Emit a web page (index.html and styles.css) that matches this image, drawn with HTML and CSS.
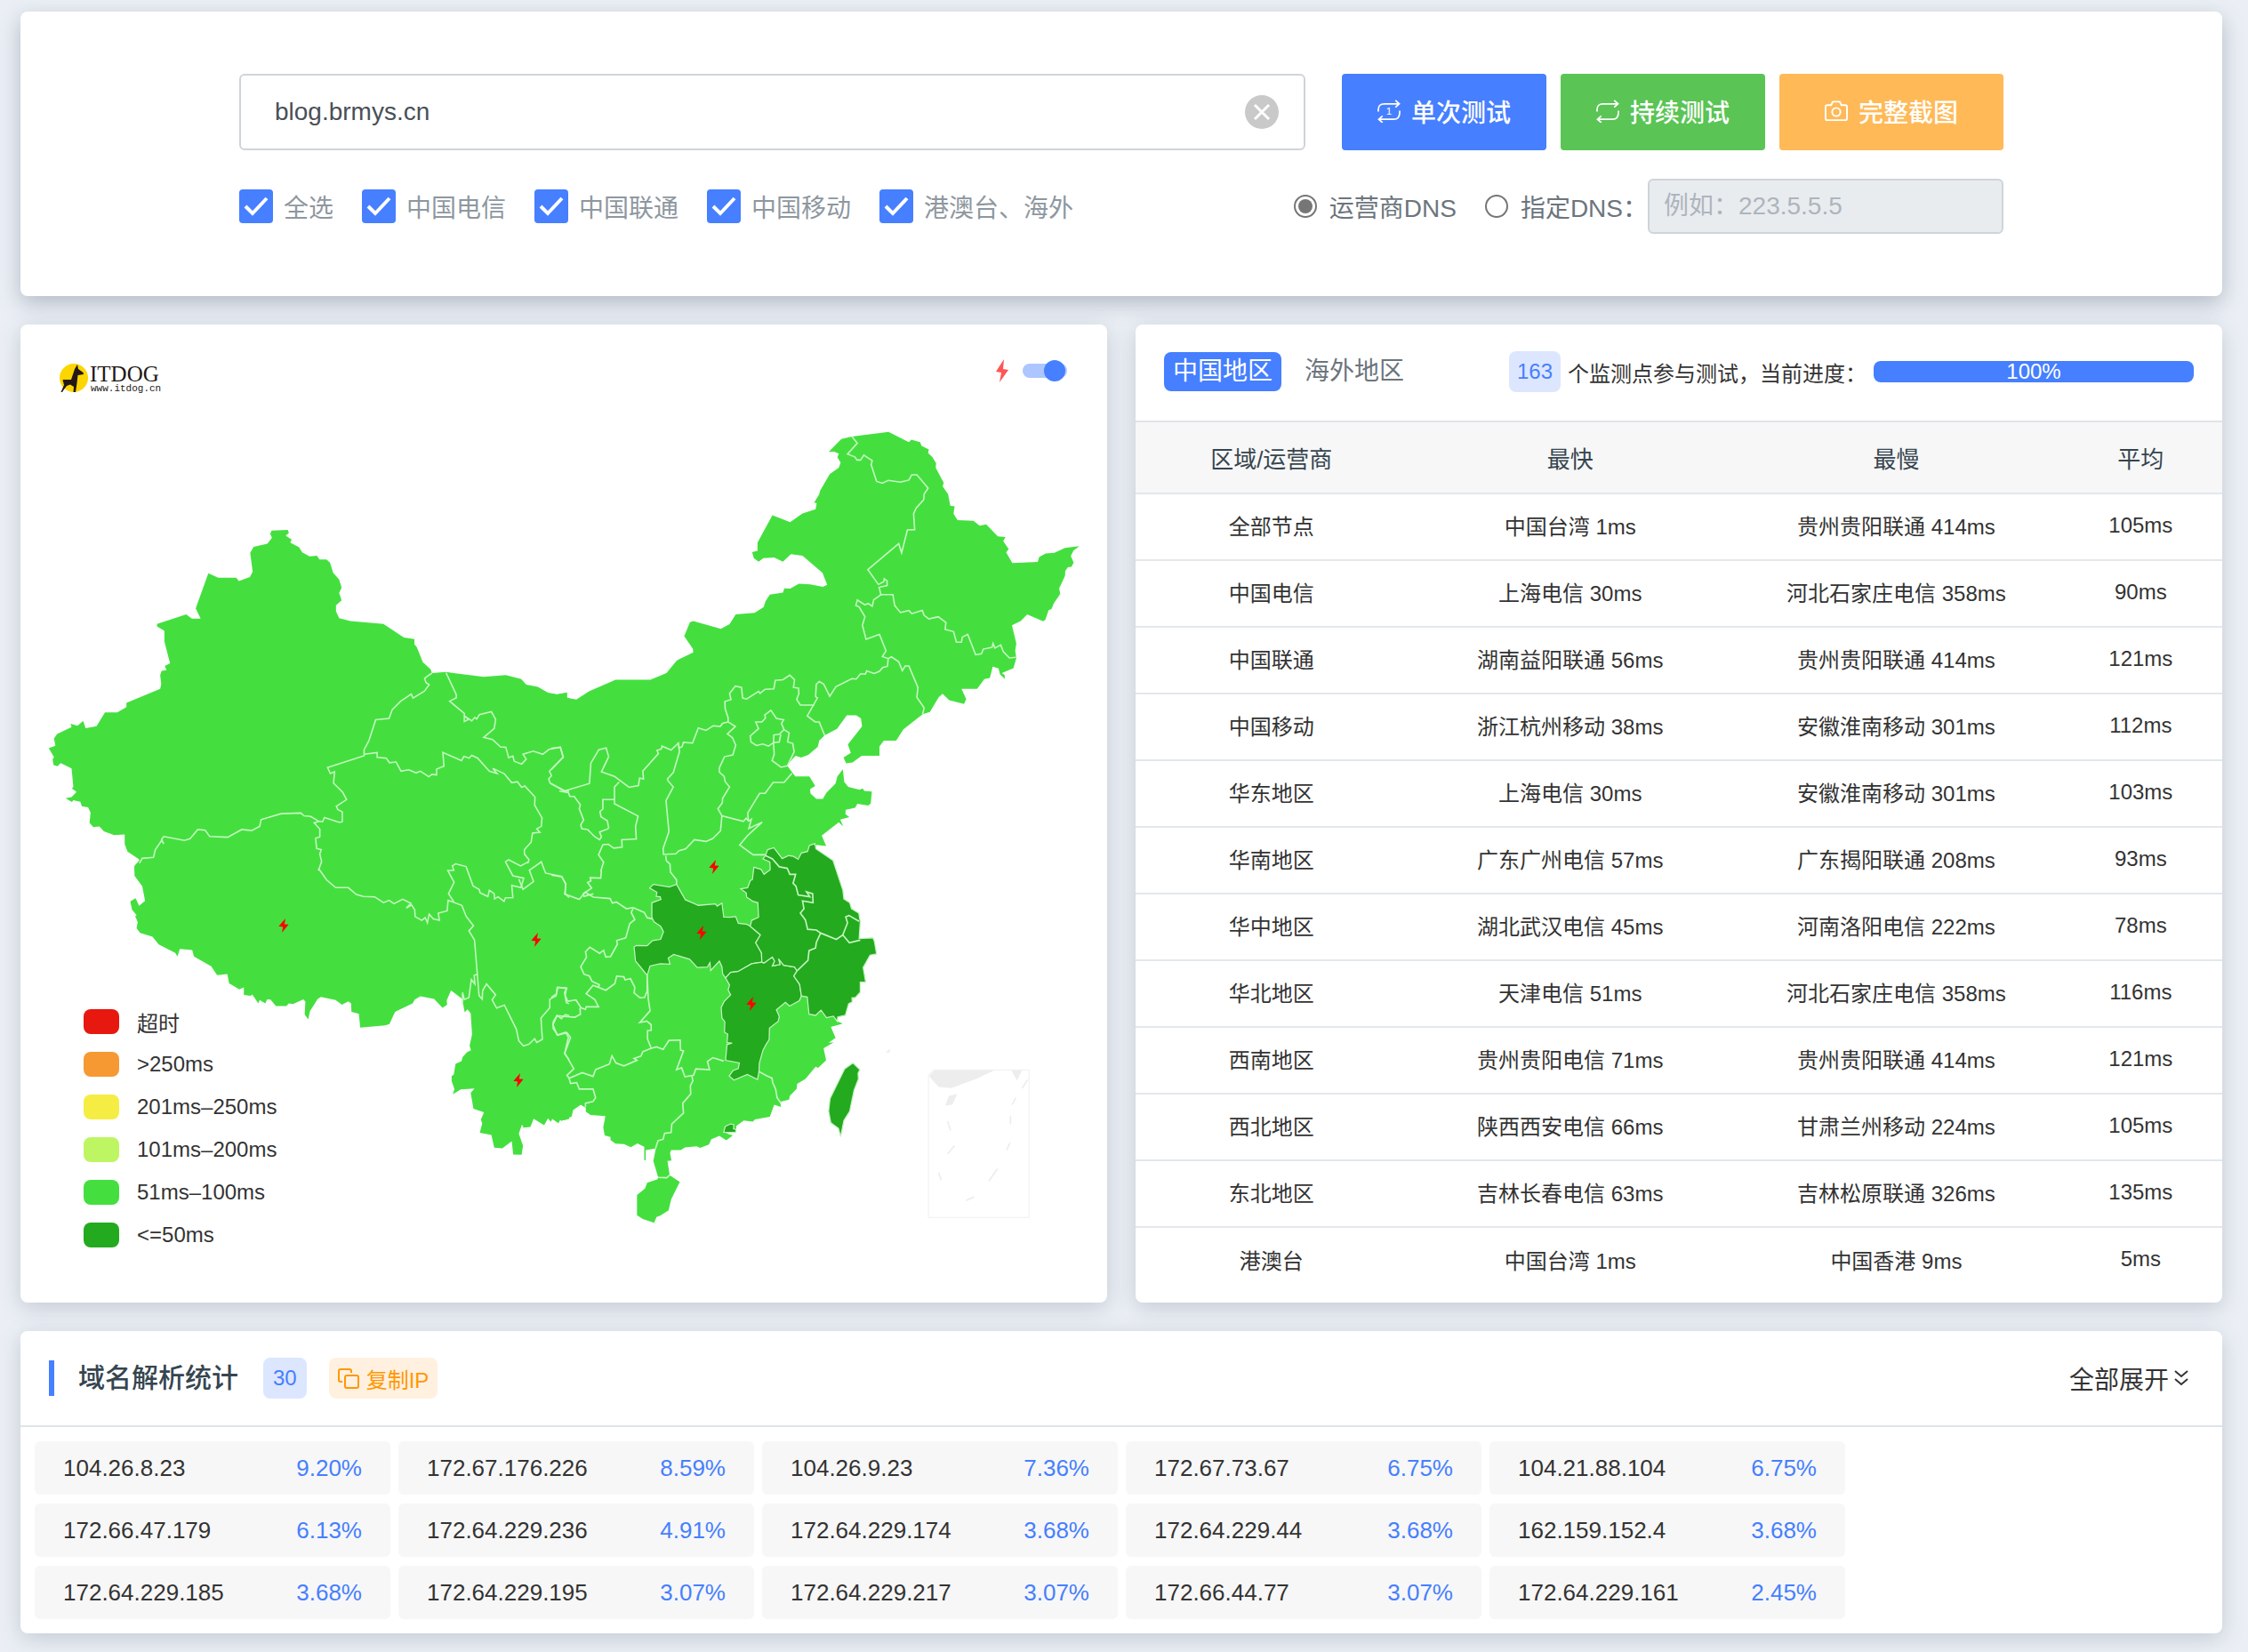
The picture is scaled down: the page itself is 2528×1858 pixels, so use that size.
FILE: index.html
```html
<!DOCTYPE html>
<html lang="zh-CN">
<head>
  <meta charset="UTF-8" />
  <meta name="viewport" content="width=device-width, initial-scale=1.0" />
  <title>ITDOG - 在线测速</title>
  <link rel="stylesheet" href="styles.css">
</head>
<body>

  <!-- icons shared by several places -->
  <svg class="sprite" aria-hidden="true">
    <symbol id="bolt" viewBox="0 0 28 40">
      <path d="M19 0L0 22L12 24L9 40L28 17L16 16Z" fill="currentColor" />
    </symbol>
    <symbol id="repeat" viewBox="0 0 27 27">
      <path d="M1 14V12Q1 5 8 5H25M21 1L25.500 5L21 9M26 13V15Q26 23 19 23H2M6 19L1.500 23L6 27" fill="none" stroke="currentColor" stroke-width="1.800" />
    </symbol>
  </svg>

  <main class="page">

    <section class="card search-card">
      <form class="search" onsubmit="return false">
        <div class="search-row">
          <div class="host-box">
            <input class="host" type="text" value="blog.brmys.cn" aria-label="域名或IP">
            <button class="clear" type="button" aria-label="清空">
              <svg viewBox="0 0 38 38" width="38" height="38">
                <circle cx="19" cy="19" r="19" fill="#c9c9c9" />
                <path d="M11 11L27 27M27 11L11 27" stroke="#fff" stroke-width="3" />
              </svg>
            </button>
          </div>
          <div class="buttons">
            <button class="btn btn-blue" type="button">
              <svg class="icon" viewBox="0 0 27 27"><use href="#repeat" /><text class="once" x="10" y="18">1</text></svg>
              单次测试
            </button>
            <button class="btn btn-green" type="button">
              <svg class="icon" viewBox="0 0 27 27"><use href="#repeat" /></svg>
              持续测试
            </button>
            <button class="btn btn-orange" type="button">
              <svg class="icon" viewBox="0 0 27 27">
                <path d="M3 6.500H7.500L9.500 2.500H17.500L19.500 6.500H24Q26 6.500 26 8.500V22Q26 24 24 24H3Q1 24 1 22V8.500Q1 6.500 3 6.500Z" fill="none" stroke="currentColor" stroke-width="2" />
                <circle cx="13.500" cy="14.500" r="4.800" fill="none" stroke="currentColor" stroke-width="2" />
              </svg>
              完整截图
            </button>
          </div>
        </div>
        <div class="search-row options">
          <div class="checks">
            <label class="check"><input type="checkbox" checked>全选</label>
            <label class="check"><input type="checkbox" checked>中国电信</label>
            <label class="check"><input type="checkbox" checked>中国联通</label>
            <label class="check"><input type="checkbox" checked>中国移动</label>
            <label class="check"><input type="checkbox" checked>港澳台、海外</label>
          </div>
          <div class="dns">
            <label class="radio"><input type="radio" name="dns" checked>运营商DNS</label>
            <label class="radio"><input type="radio" name="dns">指定DNS：</label>
            <input class="dns-ip" type="text" placeholder="例如：223.5.5.5" aria-label="指定DNS" disabled>
          </div>
        </div>
      </form>
    </section>

    <div class="columns">

      <section class="card map-card">
        <svg class="map" viewBox="0 0 1222 1100" role="img" aria-label="中国地图">
          <!-- land -->
          <g class="land">
            <path transform="translate(-3 -5) scale(.3954)" d="M88,1218 107,1211 103,1190 112,1177 153,1158 150,1148 170,1154 186,1140 193,1161 224,1155 248,1116 283,1116 309,1101 309,1089 405,1049 408,1035 405,1010 409,998 423,996 418,984 433,976 417,914 417,884 396,871 396,864 479,837 495,849 520,849 506,820 542,720 570,733 621,733 629,742 660,731 668,716 661,662 671,645 710,636 723,619 718,608 722,599 768,597 771,606 762,613 779,624 775,633 800,646 809,661 830,672 851,670 858,681 878,681 888,690 897,719 914,738 921,761 914,776 921,797 905,811 905,828 914,848 946,856 1040,864 1098,903 1128,907 1128,922 1135,931 1152,973 1174,993 1178,1004 1218,1001 1325,1015 1388,1010 1432,1021 1446,1037 1479,1043 1508,1060 1533,1065 1562,1060 1562,1074 1568,1075 1568,1568 332,1568 332,1553 345,1550 348,1536 312,1512 304,1490 304,1463 274,1465 245,1454 232,1440 215,1442 204,1430 207,1401 200,1386 182,1383 178,1370 158,1366 154,1371 136,1360 153,1357 167,1342 154,1332 158,1328 153,1275 122,1260 113,1269 102,1266 99,1250 103,1243Z" />
            <path transform="translate(597 -5) scale(.4082 .3954)" d="M0,1062 15,1065 43,1060 43,1074 69,1079 104,1056 177,1023 273,1023 317,1004 346,968 391,945 390,935 366,899 382,859 391,856 467,878 491,865 508,837 560,833 585,816 590,800 602,781 638,775 642,763 658,764 682,750 713,752 748,759 760,753 747,719 692,670 660,666 638,687 614,675 584,677 571,687 558,677 553,660 568,656 568,633 609,555 658,575 692,550 728,538 731,521 724,519 738,496 740,486 767,438 792,420 797,405 788,390 792,380 779,374 764,375 799,338 828,331 929,318 985,347 992,340 1016,347 1020,358 1040,368 1038,378 1050,390 1060,407 1059,420 1081,463 1078,473 1093,495 1099,528 1111,530 1108,551 1119,569 1163,571 1180,585 1198,581 1230,615 1251,617 1245,629 1260,651 1253,661 1270,691 1340,688 1344,674 1362,664 1386,662 1415,648 1455,643 1439,655 1431,671 1439,690 1433,702 1423,703 1416,713 1415,728 1399,763 1402,779 1384,806 1378,822 1370,825 1361,852 1355,857 1311,837 1293,856 1269,868 1281,920 1278,940 1281,962 1273,990 1241,1004 1249,1010 1249,1021 1236,1007 1232,991 1216,986 1208,1018 1193,1021 1173,1049 1130,1049 1143,1078 1137,1092 1096,1081 1078,1063 1067,1073 1043,1115 1023,1121 970,1164 950,1196 916,1196 904,1213 904,1239 855,1239 830,1258 812,1261 805,1244 825,1231 817,1207 856,1156 853,1133 840,1124 814,1124 787,1163 753,1181 738,1196 734,1214 708,1237 688,1244 673,1239 663,1250 650,1268 672,1298 711,1298 727,1325 713,1334 714,1347 730,1362 748,1362 758,1344 783,1318 788,1298 803,1278 807,1314 818,1328 849,1336 858,1332 862,1339 883,1341 880,1375 873,1381 843,1376 837,1387 811,1393 810,1405 821,1414 796,1421 804,1440 792,1428 745,1466 757,1496 729,1493 700,1568 0,1568Z" />
            <path transform="translate(-3 535) scale(.3954 .3827)" d="M345,100 345,178 332,193 332,222 354,253 362,296 345,310 335,288 320,297 325,322 338,338 334,341 341,358 338,376 348,390 383,401 401,424 448,449 454,459 461,437 496,440 501,459 550,488 567,514 596,511 601,538 612,545 630,556 643,550 643,572 662,575 667,571 684,597 688,587 704,597 709,585 719,586 734,605 764,605 771,597 783,599 812,585 818,592 816,630 826,644 831,620 853,584 862,578 904,587 922,601 940,591 948,597 949,622 970,628 974,668 1045,662 1057,658 1073,622 1123,597 1129,586 1145,576 1184,584 1208,610 1221,601 1220,588 1232,559 1264,584 1271,623 1279,615 1288,626 1292,688 1285,722 1289,735 1278,740 1265,755 1262,767 1245,775 1240,806 1234,811 1234,826 1242,849 1237,864 1260,850 1299,847 1288,860 1296,907 1326,917 1317,939 1321,950 1314,977 1347,984 1355,1021 1378,1023 1405,1002 1409,1041 1433,1042 1437,1015 1425,980 1434,953 1438,962 1458,960 1467,936 1497,955 1508,935 1516,945 1521,935 1538,949 1545,934 1553,941 1568,937 1568,-20Z" />
            <path transform="translate(597 455) scale(.4082 .4209)" d="M0,0 450,0 540,240 729,309 729,320 776,351 803,430 806,454 822,464 827,480 847,492 851,515 848,560 886,558 890,567 896,601 878,604 859,637 866,676 851,676 851,703 838,717 828,718 829,729 819,734 810,765 789,769 788,781 803,787 770,796 783,825 764,838 778,837 750,853 757,885 735,905 728,902 700,935 677,948 676,961 657,980 655,990 630,996 633,1010 614,1004 602,1036 561,1043 555,1049 530,1046 510,1060 508,1078 480,1080 500,1086 482,1099 463,1087 460,1074 463,1087 441,1096 434,1110 410,1119 400,1115 368,1118 357,1125 330,1125 327,1133 331,1153 320,1154 326,1192 354,1210 330,1257 323,1286 300,1300 290,1304 283,1319 252,1309 236,1299 236,1245 258,1228 264,1212 293,1203 294,1197 281,1154 288,1121 260,1125 260,1153 256,1151 256,1116 237,1107 219,1117 200,1109 177,1108 163,1098 163,1090 147,1086 143,1064 149,1034 108,1031 95,1022 95,1012 81,1004 60,1018 56,1035 28,1047 21,1042 18,1052 0,1040Z" />
          </g>

          <!-- province borders: north-west, south-west, north-east, south-east -->
          <g class="border" transform="translate(-3 -5) scale(.3954)">
            <path d="M1178,1004 1157,1019 1161,1031 1170,1037 1157,1055 1124,1075 1119,1064 1089,1084 1065,1108 1056,1133 1018,1137 998,1198 985,1222 985,1239 881,1273 889,1290 901,1285 898,1317 924,1343 935,1364 906,1383 910,1392 923,1399 923,1427 915,1429 872,1415 867,1427 857,1426 833,1412 814,1410 805,1402 749,1404 692,1421 688,1440 665,1452 637,1449 597,1471 546,1469 533,1451 512,1449 490,1475 474,1480 415,1469 409,1477 415,1490 409,1480 391,1507 386,1528 354,1531 346,1545" />
            <path d="M1218,1003 1247,1065 1247,1075 1228,1084 1270,1119 1270,1142 1282,1136 1270,1126 1291,1140 1300,1130 1305,1135 1313,1122 1347,1114 1359,1136 1355,1162 1325,1187 1350,1193 1373,1214 1388,1215 1396,1245 1408,1240 1412,1255 1433,1263 1446,1249 1437,1235 1466,1226 1493,1235 1511,1221 1543,1215 1551,1243 1512,1283 1518,1296 1510,1305 1514,1317 1553,1339 1568,1340" />
            <path d="M985,1235 1022,1230 1022,1244 1048,1246 1057,1259 1076,1257 1090,1283 1112,1279 1133,1288 1145,1283 1169,1299 1178,1292 1191,1294 1191,1277 1212,1269 1209,1230 1262,1253 1269,1241 1284,1246 1291,1238 1308,1246 1341,1283 1363,1290 1351,1275 1383,1290 1405,1316 1421,1313 1433,1329 1442,1325 1471,1357 1470,1380 1491,1416 1489,1440 1476,1447 1485,1457 1464,1459 1460,1485 1441,1506 1441,1519 1454,1535 1450,1546" />
            <path d="M857,1426 843,1430 859,1448 859,1470 847,1474 850,1503 863,1506 859,1519 864,1540 855,1566" />
          </g>
          <g class="border" transform="translate(-3 535) scale(.3954 .3827)">
            <path d="M855,200 878,234 904,257 940,257 963,277 983,283 1015,284 1040,301 1056,294 1070,304 1095,291 1118,303 1105,317 1120,308 1129,322 1130,342 1149,353 1159,345 1165,360 1170,335 1182,349 1199,353 1196,332 1221,325 1224,294 1263,309 1275,341 1296,369 1283,384 1299,411 1312,575 1321,585 1322,560 1333,540 1359,572 1349,587 1362,611 1384,602 1418,673 1425,707 1438,722 1454,717 1470,701 1476,712 1492,703 1488,640 1513,610 1513,585 1531,575 1534,550 1561,553 1555,565 1560,595 1568,598" />
            <path d="M1240,298 1225,275 1241,241 1223,207 1240,206 1236,193 1245,187 1275,195 1295,252 1312,262 1315,272 1337,283 1341,265 1355,275 1356,290 1366,284 1383,297 1387,287 1408,286 1405,250 1431,257 1439,229 1408,222 1387,181 1396,175 1430,193 1454,180" />
            <path d="M1425,232 1437,262 1467,239 1455,206 1489,181 1501,214 1547,224 1558,247 1557,275 1568,286" />
            <path d="M1308,511 1298,515 1300,540 1290,527 1283,580 1270,586 1265,565 1265,600" />
            <path d="M1568,633 1557,630 1546,642 1534,633 1522,660 1534,690 1558,682 1566,697 1555,745 1568,762" />
          </g>
          <g class="border" transform="translate(597 -5) scale(.4082 .3954)">
            <path d="M828,331 843,350 816,381 836,389 842,398 852,398 861,384 884,400 881,411 896,459 912,464 928,456 962,461 985,455 993,440 1007,440 1038,478 1027,495 1026,511 1005,535 998,551 1001,596 981,597 965,662 957,636 872,710 901,752 916,744 917,736 925,742 925,755 903,760 908,781 888,796 884,814 873,806 864,810 843,796 839,812 848,816 864,844 857,868 867,908 904,894 922,941 912,957 928,963 926,985 913,988 904,999 889,1005 869,998 865,1007 852,1006 840,1021 828,1020 784,1043 767,1070 750,1035 738,1028 730,1036 728,1071 733,1075 705,1126 727,1143 738,1143 753,1181" />
            <path d="M908,781 941,781 946,812 962,832 985,826 993,835 1022,826 1027,840 1040,850 1066,844 1087,860 1085,880 1108,886 1116,916 1130,916 1132,902 1147,894 1169,952 1185,949 1190,936 1214,931 1217,920 1222,933 1238,924 1245,943 1262,961 1280,959" />
            <path d="M928,963 937,958 957,972 967,997 975,984 985,984 1010,1045 1007,1073 1027,1103 1023,1121" />
            <path d="M724,1095 686,1095 676,1079 682,1062 681,1047 667,1045 670,1023 657,1010 638,1023 617,1025 613,1049 589,1050 575,1062 571,1056 538,1078 527,1075 524,1045 507,1041 491,1062 495,1079 478,1085 479,1106 487,1131 487,1143 507,1156 485,1177 499,1188 508,1209 500,1237 477,1242 463,1273 463,1286 476,1298 479,1313 491,1328 472,1360 471,1373 459,1390 470,1410 529,1426 537,1417 543,1425 551,1420 544,1446 581,1428 540,1467 519,1493 556,1521 590,1521" />
            <path d="M487,1143 472,1147 465,1156 446,1154 426,1167 405,1160 389,1203 364,1201 360,1214 352,1217 350,1203 330,1223 305,1212 303,1220 291,1224 295,1233 252,1283 254,1305 243,1303 240,1324 214,1329 174,1298 138,1285 158,1242 151,1217 131,1222 109,1260 105,1318 37,1339 0,1319" />
            <path d="M0,1279 33,1243 25,1215 0,1218" />
            <path d="M350,1203 353,1228 336,1287 320,1305 321,1310 336,1328 316,1367 324,1455 308,1503 309,1520 343,1518 352,1509 370,1504 394,1478 426,1483 444,1475 466,1453 470,1410" />
            <path d="M187,1314 174,1328 174,1376 239,1411 232,1440 234,1476 194,1478 195,1499 172,1502 157,1491 142,1492 130,1521 144,1542 136,1568" />
            <path d="M22,1340 47,1344 51,1355 63,1355 80,1379 77,1390 89,1422 81,1436 84,1447 100,1449 120,1470 133,1478 138,1470 133,1456 156,1447 158,1444 154,1424 137,1413 134,1398 142,1391 142,1364 174,1364" />
            <path d="M605,1110 620,1133 640,1137 634,1147 641,1165 628,1178 613,1180 612,1202 598,1212 583,1206 565,1210 550,1200 548,1183 571,1162 563,1143 580,1143 590,1132 588,1123Z" />
            <path d="M641,1165 655,1174 651,1200 665,1204 669,1228 650,1268 633,1272 608,1253 614,1235 612,1202 628,1200 632,1178" />
            <path d="M543,1425 541,1402 574,1346 589,1346 611,1315 641,1315 663,1289" />
          </g>
          <g class="border" transform="translate(597 455) scale(.4082 .4209)">
            <path d="M315,338 317,352 327,361 328,382 345,403 345,415" />
            <path d="M0,390 29,395 40,413 37,441 77,455 93,436 116,449 162,453 168,465 179,462 207,480 225,477 256,490 264,504 283,508" />
            <path d="M138,378 136,398 107,397 109,406 100,410 111,425 88,440 90,447 116,440" />
            <path d="M225,480 220,490 230,509 216,520 205,558 180,565 182,575 163,608 150,609 144,591 133,599 106,583 94,595 97,609 81,635 90,655 105,660 112,674 132,683 130,690 150,698 175,680 180,660 200,662 203,670 218,667 230,690 228,705 244,718 257,717 264,700 264,658 267,720 272,753 244,784 263,780 275,790 275,805 265,806 265,828 275,853 252,862 247,874 228,880 236,885 200,900 178,892 167,873 160,895 122,910 115,928 85,918 49,933 43,925 62,908 37,866 53,824 43,811 18,818 5,800 5,783 15,766 65,770 80,762 79,745" />
            <path d="M0,717 14,708 18,690 42,692 38,711 45,727 68,724 82,745 94,749 96,742 130,742 120,723 96,707 115,685 130,690" />
            <path d="M275,853 290,849 308,856 324,832 355,831 356,858 364,860 345,910 359,905 368,929 392,925 398,908 436,910 430,888 445,878 475,887" />
            <path d="M387,925 390,940 383,953 384,975 362,1000 364,1026 332,1055 330,1078 312,1080 308,1096 294,1100 287,1121" />
            <path d="M49,933 53,947 70,945 77,962 115,962 122,985 115,995 94,1000 94,1010" />
            <path d="M572,915 590,925 608,933 610,945 618,962 622,985 633,1000M294,1198 318,1199 326,1192" />
          </g>

          <!-- provinces at or below 50ms -->
          <g class="fast" transform="translate(597 455) scale(.4082 .4209)">
            <path d="M271,425 281,415 325,422 345,415 369,456 405,471 452,467 457,473 470,465 475,502 492,503 508,501 515,519 539,522 548,527 576,550 563,571 579,598 580,623 552,627 514,648 494,650 480,665 472,654 470,635 463,620 439,645 437,624 430,636 402,637 381,615 337,602 322,612 327,628 300,627 272,633 264,658 245,635 232,620 228,582 234,578 264,579 279,565 301,562 309,541 301,527 283,515 277,503 277,464 302,455 300,448 289,447 291,436Z" />
            <path d="M480,665 494,650 514,648 552,627 580,623 586,625 609,609 615,620 609,633 630,629 626,614 640,631 670,636 677,646 668,660 684,682 689,713 683,726 656,740 645,730 620,750 628,768 625,781 601,799 600,830 592,842 583,858 573,893 572,915 568,936 540,923 503,938 490,927 500,913 515,907 518,892 480,885 484,843 498,839 484,838 486,815 477,810 478,782 470,772 468,744 476,728 494,710 487,697 491,684Z" />
            <path d="M522,427 541,424 548,405 554,402 558,369 578,375 586,388 603,376 602,355 583,347 590,338 596,322 613,317 636,346 654,338 667,340 680,348 689,331 706,327 711,311 726,306 729,320 776,351 803,430 806,454 822,464 827,480 847,492 851,515 848,560 886,558 890,567 896,601 878,604 859,637 866,676 851,676 851,703 838,717 828,718 829,729 819,734 810,765 789,769 788,781 777,767 758,771 743,751 728,765 710,762 705,716 689,713 684,682 668,660 677,646 670,636 640,631 626,614 630,629 609,633 615,620 609,609 586,625 580,623 579,598 563,571 576,550 548,527 552,511 571,503 569,464 555,460 538,449 537,438Z" />
            <path d="M831,892 850,910 845,920 846,935 834,965 822,1021 806,1046 797,1089 791,1067 770,1052 764,1021 768,987 808,908Z" />
            <path d="M475,1077 479,1062 494,1055 503,1057 502,1068 509,1070 508,1078Z" />
          </g>
          <g class="border" transform="translate(597 455) scale(.4082 .4209)">
            <path d="M590,338 609,347 628,368 650,372 657,388 673,388 666,412 674,420 680,443 712,448 703,435 720,440 721,464 692,459 696,480 686,492 700,510 706,535 730,537 742,545 785,562 803,550 821,571 851,564" />
            <path d="M803,550 816,518 811,502 820,498 848,514M742,545 730,570 728,585 710,592 707,618 677,646" />
          </g>

          <!-- south sea inset -->
          <g transform="translate(597 455) scale(.4082 .4209)" fill="#ededed">
            <path d="M1055,911H1316V1305H1039V925Z" fill="none" stroke="#f3f3f3" stroke-width="3" />
            <path d="M1055,911 1222,911 1170,935 1102,959 1067,956 1041,928ZM1267,911 1297,911 1283,939ZM1095,980 1118,975 1105,1003 1085,1006ZM921,864 932,854 933,864Z" />
            <path d="M1312,937 1297,960M1280,985 1269,1004M1265,1033V1056M1264,1105 1254,1125M1229,1175 1205,1208M1165,1250 1142,1260M1067,1185 1074,1206M1111,1113 1092,1135M1091,1047 1100,1073" fill="none" stroke="#ededed" stroke-width="4" />
          </g>

          <g class="bolts">
            <use href="#bolt" x="290" y="668" width="12" height="16" />
            <use href="#bolt" x="574" y="684" width="12" height="16" />
            <use href="#bolt" x="554" y="842" width="12" height="16" />
            <use href="#bolt" x="774" y="602" width="12" height="16" />
            <use href="#bolt" x="760" y="676" width="12" height="16" />
            <use href="#bolt" x="816" y="756" width="12" height="16" />
          </g>
        </svg>

        <svg class="logo" viewBox="0 0 120 38" width="120" height="38" role="img" aria-label="ITDOG">
          <circle cx="17" cy="18" r="16" fill="#fdd500" />
          <path d="M21 3L22 8L27.500 12L28 14L21.500 15L20.500 24L19 34H16.500L17 28L13 25.500L9 27L6 31L4 34H2.500L6 26L4.500 20V22L5 20H14L18 8Z" fill="#231815" />
          <text class="logo-name" x="35" y="22">ITDOG</text>
          <text class="logo-url" x="36" y="33">www.itdog.cn</text>
        </svg>

        <label class="switch">
          <svg class="switch-bolt" width="14" height="26" viewBox="0 0 14 26"><path d="M9 0L0 14L6 15L4 26L14 12L8 11Z" fill="currentColor" /></svg>
          <input type="checkbox" checked aria-label="显示故障">
        </label>

        <ul class="legend">
          <li><span class="swatch timeout"></span>超时</li>
          <li><span class="swatch over250"></span>&gt;250ms</li>
          <li><span class="swatch to250"></span>201ms–250ms</li>
          <li><span class="swatch to200"></span>101ms–200ms</li>
          <li><span class="swatch to100"></span>51ms–100ms</li>
          <li><span class="swatch to50"></span>&lt;=50ms</li>
        </ul>
      </section>

      <section class="card">
        <div class="card-head">
          <div class="tabs">
            <button class="tab active" type="button">中国地区</button>
            <button class="tab" type="button">海外地区</button>
          </div>
          <div class="progress-info">
            <span class="badge">163</span>
            <span>个监测点参与测试，当前进度：</span>
            <div class="progress">100%</div>
          </div>
        </div>
        <table class="stats">
          <thead>
            <tr><th>区域/运营商</th><th>最快</th><th>最慢</th><th>平均</th></tr>
          </thead>
          <tbody>
            <tr><td>全部节点</td><td>中国台湾 1ms</td><td>贵州贵阳联通 414ms</td><td>105ms</td></tr>
            <tr><td>中国电信</td><td>上海电信 30ms</td><td>河北石家庄电信 358ms</td><td>90ms</td></tr>
            <tr><td>中国联通</td><td>湖南益阳联通 56ms</td><td>贵州贵阳联通 414ms</td><td>121ms</td></tr>
            <tr><td>中国移动</td><td>浙江杭州移动 38ms</td><td>安徽淮南移动 301ms</td><td>112ms</td></tr>
            <tr><td>华东地区</td><td>上海电信 30ms</td><td>安徽淮南移动 301ms</td><td>103ms</td></tr>
            <tr><td>华南地区</td><td>广东广州电信 57ms</td><td>广东揭阳联通 208ms</td><td>93ms</td></tr>
            <tr><td>华中地区</td><td>湖北武汉电信 45ms</td><td>河南洛阳电信 222ms</td><td>78ms</td></tr>
            <tr><td>华北地区</td><td>天津电信 51ms</td><td>河北石家庄电信 358ms</td><td>116ms</td></tr>
            <tr><td>西南地区</td><td>贵州贵阳电信 71ms</td><td>贵州贵阳联通 414ms</td><td>121ms</td></tr>
            <tr><td>西北地区</td><td>陕西西安电信 66ms</td><td>甘肃兰州移动 224ms</td><td>105ms</td></tr>
            <tr><td>东北地区</td><td>吉林长春电信 63ms</td><td>吉林松原联通 326ms</td><td>135ms</td></tr>
            <tr><td>港澳台</td><td>中国台湾 1ms</td><td>中国香港 9ms</td><td>5ms</td></tr>
          </tbody>
        </table>
      </section>

    </div>

    <section class="card">
      <div class="card-head">
        <div class="title-box">
          <h2 class="title">域名解析统计</h2>
          <span class="badge count">30</span>
          <button class="copy" type="button">
            <svg viewBox="0 0 24 24" width="24" height="24" fill="none" stroke="currentColor" stroke-width="2">
              <rect x="8" y="9" width="15" height="14" rx="2" />
              <path d="M15 6V4Q15 2 13 2H3Q1 2 1 4V14Q1 16 3 16H5" />
            </svg>
            复制IP
          </button>
        </div>
        <a class="expand" href="#">全部展开
          <svg viewBox="0 0 16 18" width="16" height="18" fill="none" stroke="currentColor" stroke-width="2"><path d="M1 1L8 7L15 1M1 10L8 16L15 10" /></svg>
        </a>
      </div>
      <ul class="ips">
        <li><span>104.26.8.23</span><span class="rate">9.20%</span></li>
        <li><span>172.67.176.226</span><span class="rate">8.59%</span></li>
        <li><span>104.26.9.23</span><span class="rate">7.36%</span></li>
        <li><span>172.67.73.67</span><span class="rate">6.75%</span></li>
        <li><span>104.21.88.104</span><span class="rate">6.75%</span></li>
        <li><span>172.66.47.179</span><span class="rate">6.13%</span></li>
        <li><span>172.64.229.236</span><span class="rate">4.91%</span></li>
        <li><span>172.64.229.174</span><span class="rate">3.68%</span></li>
        <li><span>172.64.229.44</span><span class="rate">3.68%</span></li>
        <li><span>162.159.152.4</span><span class="rate">3.68%</span></li>
        <li><span>172.64.229.185</span><span class="rate">3.68%</span></li>
        <li><span>172.64.229.195</span><span class="rate">3.07%</span></li>
        <li><span>172.64.229.217</span><span class="rate">3.07%</span></li>
        <li><span>172.66.44.77</span><span class="rate">3.07%</span></li>
        <li><span>172.64.229.161</span><span class="rate">2.45%</span></li>
      </ul>
    </section>

  </main>
</body>
</html>
```
FILE: styles.css
```css
* { box-sizing: border-box; }
body {
  margin: 0;
  background-color: #ebeff5;
  color: #333;
  font-family: "Liberation Sans", "Noto Sans CJK SC", sans-serif;
  font-size: 24px;
}
input, button {
  font-family: inherit;
  font-size: 28px;
}
button {
  border: none;
  cursor: pointer;
}
ul {
  margin: 0;
  padding: 0;
  list-style: none;
}
.sprite {
  display: none;
}
.page {
  display: flex;
  flex-direction: column;
  gap: 32px;
  padding: 13px 29px 21px 23px;
}
.card {
  min-width: 0;
  background-color: #fff;
  border-radius: 8px;
  box-shadow: 0 6px 24px rgba(60, 75, 100, 0.22);
}
.columns {
  display: grid;
  grid-template-columns: 1fr 1fr;
  gap: 32px;
}

/* search form */
.search-card {
  padding: 70px 32px;
  box-shadow: 0 8px 24px rgba(60, 75, 100, 0.32);
}
.search {
  display: flex;
  flex-direction: column;
  gap: 32px;
  max-width: 1984px;
  margin: 0 auto;
}
.search-row {
  display: flex;
  align-items: center;
  gap: 41px;
}
.host-box {
  display: flex;
  flex: 1;
  align-items: center;
  height: 86px;
  padding: 0 28px 0 38px;
  border: 2px solid #ced4da;
  border-radius: 6px;
}
.host {
  flex: 1;
  padding: 0;
  border: none;
  outline: none;
  color: #495057;
}
.clear {
  display: flex;
  padding: 0;
  background: none;
}
.buttons {
  display: flex;
  gap: 16px;
}
.btn {
  display: flex;
  align-items: center;
  gap: 12px;
  height: 86px;
  padding: 0 40px 2px;
  border-radius: 4px;
  color: #fff;
  font-weight: 500;
}
.icon {
  width: 26px;
  height: 26px;
}
.once {
  fill: #fff;
  font-size: 12px;
}
.btn-blue { background-color: #467fff; }
.btn-green { background-color: #5ac455; }
.btn-orange {
  padding: 0 51px 2px;
  background-color: #ffb957;
}
.options {
  justify-content: space-between;
  font-size: 28px;
}
.checks {
  display: flex;
  gap: 32px;
  color: #8e979f;
}
.check {
  display: flex;
  align-items: center;
  gap: 12px;
}
.check input {
  appearance: none;
  width: 38px;
  height: 38px;
  margin: 0;
  border-radius: 4px;
  background: #467fff url("data:image/svg+xml,%3Csvg xmlns='http://www.w3.org/2000/svg' viewBox='0 0 38 38'%3E%3Cpath d='M7 19L15 27L31 10' fill='none' stroke='white' stroke-width='4'/%3E%3C/svg%3E");
}
.dns {
  display: flex;
  align-items: center;
  color: #6c757d;
}
.radio {
  display: flex;
  align-items: center;
  gap: 14px;
}
.radio + .radio { margin-left: 32px; }
.radio input {
  appearance: none;
  width: 26px;
  height: 26px;
  margin: 0;
  border: 2px solid #767676;
  border-radius: 50%;
}
.radio input:checked {
  background: #767676;
  background-clip: content-box;
  padding: 3px;
}
.dns-ip {
  width: 400px;
  height: 62px;
  padding: 0 16px;
  border: 2px solid #ced4da;
  border-radius: 6px;
  background-color: #e9ecef;
}
.dns-ip::placeholder { color: #adb5bd; }

/* map: every child shares the one grid cell */
.map-card { display: grid; }
.map-card > * { grid-area: 1 / 1; }
.map {
  display: block;
  width: 100%;
}
.land { fill: #44df3f; }
.fast {
  fill: #23aa1e;
  stroke: #c5f2c1;
  stroke-width: 3;
}
.border {
  fill: none;
  stroke: #c5f7c1;
  stroke-width: 4;
}
.bolts { color: #f00; }
.logo {
  margin: 42px 0 0 43px;
}
.logo-name {
  fill: #231815;
  font-family: "Liberation Serif", serif;
  font-size: 25px;
}
.logo-url {
  fill: #231815;
  font-family: "Liberation Mono", monospace;
  font-size: 11px;
}
.switch {
  display: flex;
  place-self: start end;
  align-items: center;
  gap: 16px;
  margin: 39px 45px 0 0;
  color: #f55;
}
.switch input {
  position: relative;
  appearance: none;
  width: 50px;
  height: 16px;
  margin: 0;
  border-radius: 8px;
  background-color: #adc6ff;
}
.switch input::after {
  content: "";
  position: absolute;
  top: -4px;
  right: 2px;
  width: 24px;
  height: 24px;
  border-radius: 50%;
  background-color: #467fff;
}
.legend {
  display: flex;
  flex-direction: column;
  place-self: end start;
  gap: 20px;
  margin: 0 0 62px 71px;
}
.legend li {
  display: flex;
  align-items: center;
  gap: 20px;
  height: 28px;
}
.swatch {
  width: 40px;
  height: 28px;
  border-radius: 8px;
}
.timeout { background-color: #e6180f; }
.over250 { background-color: #f69932; }
.to250 { background-color: #f6ed44; }
.to200 { background-color: #bef663; }
.to100 { background-color: #44df3f; }
.to50 { background-color: #23aa1e; }

/* card header */
.card-head {
  display: flex;
  align-items: center;
  justify-content: space-between;
  height: 108px;
  padding: 0 32px;
  border-bottom: 2px solid #dfe4e9;
}
.columns .card-head {
  height: 110px;
  padding-bottom: 2px;
}
.tabs {
  display: flex;
  gap: 16px;
}
.tab {
  height: 44px;
  padding: 0 10px;
  border-radius: 8px;
  background: none;
  color: #6c757d;
  line-height: 44px;
}
.tab.active {
  background-color: #467fff;
  color: #fff;
}
.progress-info {
  display: flex;
  align-items: center;
  gap: 8px;
}
.badge {
  padding: 0 9px;
  border-radius: 8px;
  background-color: #dde6ff;
  color: #467fff;
  line-height: 46px;
}
.progress {
  width: 360px;
  border-radius: 8px;
  background-color: #467fff;
  color: #fff;
  line-height: 24px;
  text-align: center;
}

/* stats table */
.stats {
  width: 100%;
  border-collapse: collapse;
  table-layout: fixed;
  text-align: center;
}
.stats th, .stats td {
  height: 75px;
  padding: 0 0 4px;
  border-bottom: 2px solid #e2e8ec;
}
.stats th {
  width: 30%;
  height: 80px;
  padding: 0;
  background-color: #f7f7f7;
  color: #36454f;
  font-size: 26px;
  font-weight: 400;
}
.stats th:first-child { width: 25%; }
.stats th:last-child { width: 15%; }
.stats tbody tr:last-child td { border-bottom: none; }

/* resolved addresses */
.title-box {
  display: flex;
  align-items: center;
}
.title {
  margin: 0;
  padding-left: 27px;
  border-left: 6px solid #467fff;
  color: #36454f;
  font-size: 30px;
  font-weight: 500;
  line-height: 40px;
}
.count {
  margin: 0 25px 0 28px;
  padding: 0 11px;
}
.copy {
  display: flex;
  align-items: center;
  gap: 8px;
  height: 46px;
  padding: 0 10px;
  border-radius: 8px;
  background-color: #fff0e0;
  color: #ff9800;
  font-size: 24px;
}
.expand {
  display: flex;
  align-items: center;
  gap: 6px;
  padding-right: 6px;
  color: #333;
  font-size: 28px;
  text-decoration: none;
}
.ips {
  display: grid;
  grid-template-columns: repeat(auto-fill, 400px);
  gap: 10px 9px;
  max-width: 2092px;
  padding: 16px;
}
.ips li {
  display: flex;
  align-items: center;
  justify-content: space-between;
  height: 60px;
  padding: 0 32px;
  border-radius: 6px;
  background-color: #f7f7f7;
  font-size: 26px;
}
.rate { color: #467fff; }
```
